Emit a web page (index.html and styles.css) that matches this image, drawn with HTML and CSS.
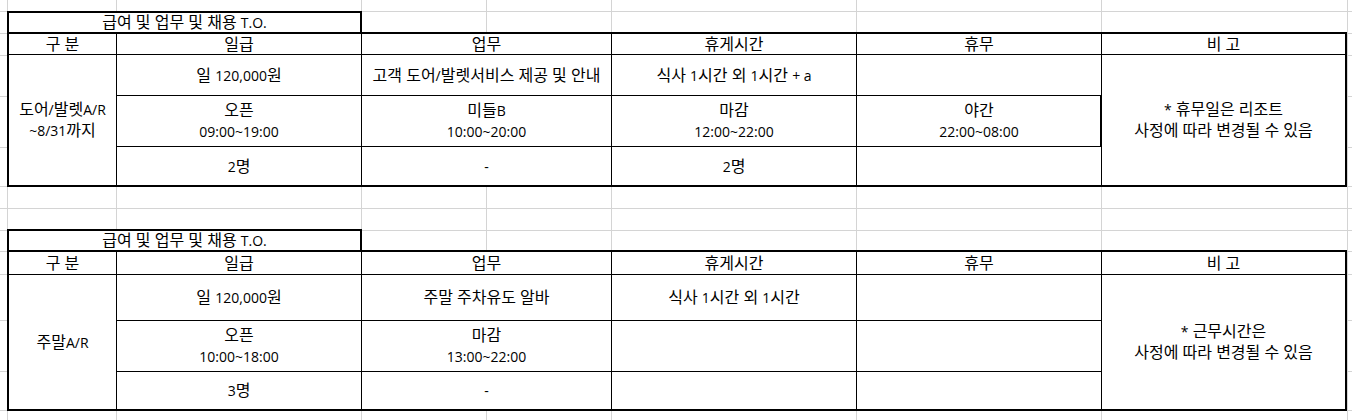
FILE: index.html
```html
<!DOCTYPE html>
<html lang="ko">
<head>
<meta charset="utf-8">
<title>급여 및 업무 및 채용 T.O.</title>
<link rel="stylesheet" href="styles.css">
</head>
<body>
<main class="sheet">
  <section class="block">
    <div class="title"><p>급여 및 업무 및 채용 <span class="lat">T.O.</span></p></div>
    <div class="table table-a">
      <div class="cell"><p>구 분</p></div>
      <div class="cell"><p>일급</p></div>
      <div class="cell"><p>업무</p></div>
      <div class="cell"><p>휴게시간</p></div>
      <div class="cell"><p>휴무</p></div>
      <div class="cell"><p>비 고</p></div>

      <div class="cell span-rows"><p>도어<span class="lat">/</span>발렛<span class="lat">A/R</span><br><span class="lat">~8/31</span>까지</p></div>
      <div class="cell"><p>일 <span class="lat">120,000</span>원</p></div>
      <div class="cell"><p>고객 도어<span class="lat">/</span>발렛서비스 제공 및 안내</p></div>
      <div class="cell"><p>식사 <span class="lat">1</span>시간 외 <span class="lat">1</span>시간 <span class="lat">+ a</span></p></div>
      <div class="cell"></div>
      <div class="cell span-rows"><p><span class="lat">*</span> 휴무일은 리조트<br>사정에 따라 변경될 수 있음</p></div>

      <div class="cell"><p>오픈<br><span class="lat">09:00~19:00</span></p></div>
      <div class="cell"><p>미들<span class="lat">B</span><br><span class="lat">10:00~20:00</span></p></div>
      <div class="cell"><p>마감<br><span class="lat">12:00~22:00</span></p></div>
      <div class="cell boxed"><p>야간<br><span class="lat">22:00~08:00</span></p></div>

      <div class="cell"><p><span class="lat">2</span>명</p></div>
      <div class="cell"><p><span class="lat">-</span></p></div>
      <div class="cell"><p><span class="lat">2</span>명</p></div>
      <div class="cell"></div>
    </div>
  </section>

  <section class="block block-next">
    <div class="title"><p>급여 및 업무 및 채용 <span class="lat">T.O.</span></p></div>
    <div class="table table-b">
      <div class="cell"><p>구 분</p></div>
      <div class="cell"><p>일급</p></div>
      <div class="cell"><p>업무</p></div>
      <div class="cell"><p>휴게시간</p></div>
      <div class="cell"><p>휴무</p></div>
      <div class="cell"><p>비 고</p></div>

      <div class="cell span-rows"><p>주말<span class="lat">A/R</span></p></div>
      <div class="cell"><p>일 <span class="lat">120,000</span>원</p></div>
      <div class="cell"><p>주말 주차유도 알바</p></div>
      <div class="cell"><p>식사 <span class="lat">1</span>시간 외 <span class="lat">1</span>시간</p></div>
      <div class="cell"></div>
      <div class="cell span-rows"><p><span class="lat">*</span> 근무시간은<br>사정에 따라 변경될 수 있음</p></div>

      <div class="cell"><p>오픈<br><span class="lat">10:00~18:00</span></p></div>
      <div class="cell"><p>마감<br><span class="lat">13:00~22:00</span></p></div>
      <div class="cell"></div>
      <div class="cell"></div>

      <div class="cell"><p><span class="lat">3</span>명</p></div>
      <div class="cell"><p><span class="lat">-</span></p></div>
      <div class="cell"></div>
      <div class="cell"></div>
    </div>
  </section>
</main>
</body>
</html>
```

FILE: styles.css
```css
html, body {
  margin: 0;
  padding: 0;
  background: #fff;
}

body {
  width: 1352px;
  height: 420px;
  overflow: hidden;
  font-family: "Open Sans", "Noto Sans CJK KR", sans-serif;
  font-size: 16px;
  color: #000;
}

p {
  margin: 0;
}

/* Latin letters and figures are set smaller than the Hangul, as in the original sheet font */
.lat {
  font-size: 14px;
}

.sheet {
  --grid: #d4d4d4;
  box-sizing: border-box;
  height: 420px;
  padding: 11px 0 0 7px;
  background:
    linear-gradient(var(--grid), var(--grid)) 7px 0 / 1px 100% no-repeat,
    linear-gradient(var(--grid), var(--grid)) 116px 0 / 1px 100% no-repeat,
    linear-gradient(var(--grid), var(--grid)) 361px 0 / 1px 100% no-repeat,
    linear-gradient(var(--grid), var(--grid)) 486px 0 / 1px 100% no-repeat,
    linear-gradient(var(--grid), var(--grid)) 611px 0 / 1px 100% no-repeat,
    linear-gradient(var(--grid), var(--grid)) 856px 0 / 1px 100% no-repeat,
    linear-gradient(var(--grid), var(--grid)) 1101px 0 / 1px 100% no-repeat,
    linear-gradient(var(--grid), var(--grid)) 1347px 0 / 1px 100% no-repeat,
    linear-gradient(var(--grid), var(--grid)) 0 11px / 100% 1px no-repeat,
    linear-gradient(var(--grid), var(--grid)) 0 33px / 100% 1px no-repeat,
    linear-gradient(var(--grid), var(--grid)) 0 55px / 100% 1px no-repeat,
    linear-gradient(var(--grid), var(--grid)) 0 96px / 100% 1px no-repeat,
    linear-gradient(var(--grid), var(--grid)) 0 147px / 100% 1px no-repeat,
    linear-gradient(var(--grid), var(--grid)) 0 186px / 100% 1px no-repeat,
    linear-gradient(var(--grid), var(--grid)) 0 208px / 100% 1px no-repeat,
    linear-gradient(var(--grid), var(--grid)) 0 230px / 100% 1px no-repeat,
    linear-gradient(var(--grid), var(--grid)) 0 251px / 100% 1px no-repeat,
    linear-gradient(var(--grid), var(--grid)) 0 274px / 100% 1px no-repeat,
    linear-gradient(var(--grid), var(--grid)) 0 320px / 100% 1px no-repeat,
    linear-gradient(var(--grid), var(--grid)) 0 371px / 100% 1px no-repeat,
    linear-gradient(var(--grid), var(--grid)) 0 410px / 100% 1px no-repeat,
    #fff;
}

.block-next {
  margin-top: 42px;
}

.title {
  box-sizing: border-box;
  display: flex;
  align-items: center;
  justify-content: center;
  width: 355px;
  height: 21px;
  border: 2px solid #000;
  border-bottom: 0;
  background: #fff;
  line-height: 19px;
  white-space: nowrap;
}

.table {
  display: grid;
  box-sizing: border-box;
  width: 1340px;
  border: 2px solid #000;
  background: #000;
  gap: 1px;
  grid-template-columns: 107px 244px 249px 244px 244px 243px;
}

.table-a {
  grid-template-rows: 20px 40px 50px 38px;
}

.table-b {
  grid-template-rows: 22px 45px 50px 37px;
}

.cell {
  display: flex;
  align-items: center;
  justify-content: center;
  background: #fff;
  text-align: center;
  line-height: 21px;
  white-space: nowrap;
}

.span-rows {
  grid-row: span 3;
}

.boxed {
  box-shadow: inset -1px 0 #000;
}
```
